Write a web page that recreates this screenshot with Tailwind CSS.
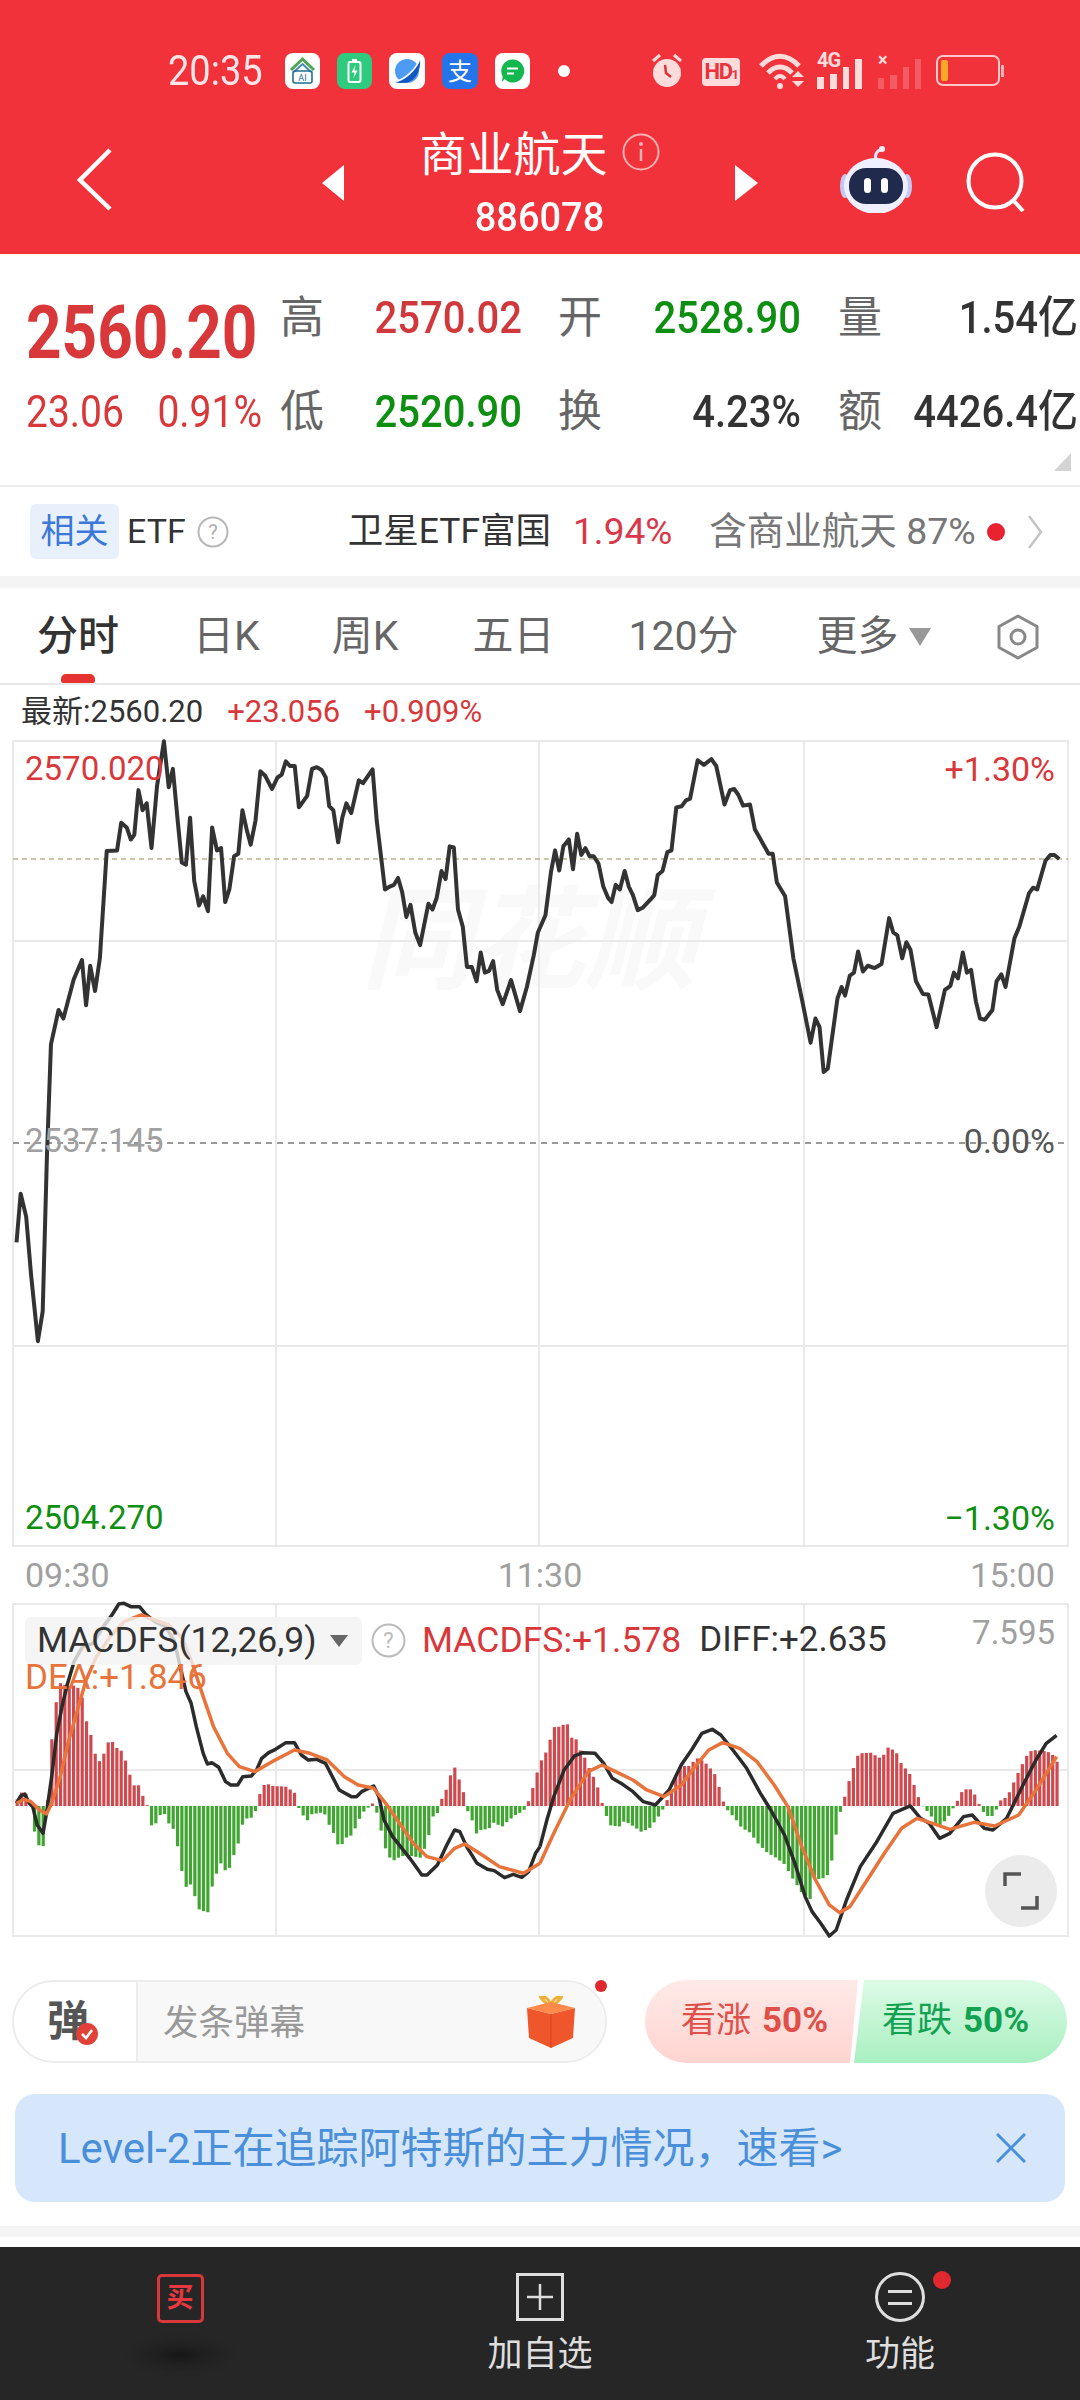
<!DOCTYPE html>
<html lang="zh-CN">
  <head>
    <meta charset="UTF-8" />
    <meta name="viewport" content="width=device-width, initial-scale=1.0" />
    <title>商业航天 886078</title>
    <script src="https://cdn.jsdelivr.net/npm/@tailwindcss/browser@4"></script>
  </head>
  <body class="bg-white font-['Roboto','Noto_Sans_CJK_SC',sans-serif] text-[#333]">
    <div class="w-[1080px] h-[2400px] overflow-hidden flex flex-col">
      <!-- red header: status bar + title -->
      <header class="h-[254px] shrink-0 bg-[#f2323b] text-white">
        <div class="h-[131px] pt-[53px] pl-[168px] flex items-start">
          <span class="w-[94px] h-[36px] leading-[36px] text-[38px] text-[#ffe6e6] scale-y-[1.1]">20:35</span>
          <div class="ml-[23px] flex items-center gap-[17px] h-[36px]">
            <svg class="w-[35px] h-[36px]" viewBox="0 0 35 36">
              <rect width="35" height="36" rx="8" fill="#fff" />
              <path d="M6 17 17.5 6 29 17" fill="none" stroke="#4da64f" stroke-width="3" />
              <path d="M9 19 17.5 11 26 19" fill="none" stroke="#3c8fb0" stroke-width="2" />
              <rect x="8" y="18" width="19" height="12" rx="2" fill="none" stroke="#1f6f95" stroke-width="1.6" />
              <text x="17.5" y="27.5" font-size="9" text-anchor="middle" fill="#1f6f95" font-family="Roboto">AI</text>
            </svg>
            <svg class="w-[35px] h-[36px]" viewBox="0 0 35 36">
              <rect width="35" height="36" rx="8" fill="#2ecb7f" />
              <rect x="11.5" y="9" width="12" height="20" rx="2" fill="none" stroke="#fff" stroke-width="2" />
              <rect x="15" y="6" width="5" height="3" fill="#fff" />
              <path d="M18.5 12 14.5 19.5H17.5L16.5 25 20.5 17.5H17.5Z" fill="#fff" />
            </svg>
            <svg class="w-[36px] h-[36px]" viewBox="0 0 36 36">
              <rect width="36" height="36" rx="8" fill="#fff" />
              <circle cx="18" cy="18" r="12" fill="#4d9cf2" />
              <path d="M6 29C14 29 26 20 31 7 32 18 26 30 14 30 11 30 8 30 6 29Z" fill="#1557c0" />
              <path d="M8 28C16 26 26 17 30 8" fill="none" stroke="#fff" stroke-width="1.6" />
            </svg>
            <svg class="w-[36px] h-[36px]" viewBox="0 0 36 36">
              <rect width="36" height="36" rx="8" fill="#2474ea" />
              <text x="18" y="27" font-size="24" text-anchor="middle" fill="#fff" font-family="Noto Sans CJK SC">支</text>
            </svg>
            <svg class="w-[35px] h-[36px]" viewBox="0 0 35 36">
              <rect width="35" height="36" rx="8" fill="#fff" />
              <path d="M17.5 6.5A11.5 11.5 0 1 1 9.5 26L7 29 7.6 23.5A11.5 11.5 0 0 1 17.5 6.5Z" fill="#12b84f" />
              <path d="M12 15.5H23M12 20.5H19" stroke="#fff" stroke-width="2" />
            </svg>
            <span class="ml-[11px] w-[12px] h-[12px] rounded-full bg-white"></span>
          </div>
          <div class="ml-[81px] flex items-start text-[#ffdcdc]">
            <svg class="w-[32px] h-[36px]" viewBox="0 0 32 36">
              <circle cx="16" cy="20" r="14" fill="#ffdcdc" />
              <path d="M2 8 9 2M30 8 23 2" stroke="#ffdcdc" stroke-width="3" />
              <path d="M14 12 15 20 20 24" fill="none" stroke="#d9333c" stroke-width="2.5" />
            </svg>
            <span class="ml-[19px] mt-[5px] w-[38px] h-[28px] rounded-[4px] bg-[#ffdcdc] text-[#e8333c] font-bold text-[22px] leading-[28px] text-center tracking-[-1.5px]">HD<span class="text-[13px]">1</span></span>
            <svg class="ml-[19px] w-[45px] h-[36px]" viewBox="0 0 45 36">
              <path d="M2 13C14 0 28 0 40 13" fill="none" stroke="#ffdcdc" stroke-width="5" />
              <path d="M9 20C16 12 26 12 33 20" fill="none" stroke="#ffdcdc" stroke-width="5" />
              <path d="M16 26C19 22 23 22 26 26" fill="none" stroke="#ffdcdc" stroke-width="4" />
              <circle cx="21" cy="33" r="3" fill="#ffdcdc" />
              <path d="M33 24H45L39 18ZM33 28H45L39 34Z" fill="#ffdcdc" />
            </svg>
            <div class="ml-[13px] w-[45px] h-[36px] relative">
              <span class="absolute left-0 -top-[3px] text-[20px] font-bold leading-[20px] tracking-[-1px]">4G</span>
              <div class="absolute inset-0 flex items-end gap-[6px]">
                <span class="w-[7px] h-[12px] bg-[#ffdcdc]"></span>
                <span class="w-[7px] h-[15px] bg-[#ffdcdc]"></span>
                <span class="w-[7px] h-[22px] bg-[#ffdcdc]"></span>
                <span class="w-[7px] h-[30px] bg-[#ffdcdc]"></span>
              </div>
            </div>
            <div class="ml-[16px] w-[43px] h-[36px] relative">
              <span class="absolute left-0 -top-[2px] text-[18px] font-bold leading-[18px]">×</span>
              <div class="absolute inset-0 flex items-end gap-[6px]">
                <span class="w-[7px] h-[11px] bg-white/20"></span>
                <span class="w-[7px] h-[14px] bg-white/20"></span>
                <span class="w-[7px] h-[22px] bg-white/20"></span>
                <span class="w-[7px] h-[30px] bg-white/20"></span>
              </div>
            </div>
            <div class="ml-[15px] mt-[2px] flex items-center">
              <div class="w-[64px] h-[31px] rounded-[7px] border-[2px] border-[#ffc8c8] p-[3px]">
                <div class="w-[7px] h-full rounded-[2px] bg-[#f9a825]"></div>
              </div>
              <span class="ml-[1px] w-[3px] h-[12px] bg-[#ffb4b4]"></span>
            </div>
          </div>
        </div>
        <nav class="flex items-start">
          <svg class="ml-[77px] mt-[17px] w-[35px] h-[63px]" viewBox="0 0 35 63">
            <path d="M33 2 3 32 33 61" fill="none" stroke="#fff" stroke-width="4.5" />
          </svg>
          <svg class="ml-[210px] mt-[34px] w-[22px] h-[36px]" viewBox="0 0 22 36">
            <path d="M22 0V36L0 18Z" fill="#fff" />
          </svg>
          <div class="w-[391px] flex flex-col items-center">
            <div class="h-[44px] mt-[2px] flex items-center">
              <span class="text-[47px] leading-[44px]">商业航天</span>
              <svg class="ml-[14px] w-[38px] h-[38px] -mt-[6px]" viewBox="0 0 38 38">
                <circle cx="19" cy="19" r="17.5" fill="none" stroke="#ffb0b0" stroke-width="2" />
                <path d="M19 16V28" stroke="#ffb0b0" stroke-width="2.5" />
                <circle cx="19" cy="11" r="2" fill="#ffb0b0" />
              </svg>
            </div>
            <span class="mt-[25px] h-[31px] leading-[31px] text-[38px] text-white font-medium block scale-y-[1.08]">886078</span>
          </div>
          <svg class="mt-[34px] w-[23px] h-[36px]" viewBox="0 0 23 36">
            <path d="M0 0V36L23 18Z" fill="#fff" />
          </svg>
          <svg class="ml-[82px] mt-[15px] w-[72px] h-[67px]" viewBox="0 0 72 67">
            <path d="M36 14C34 8 38 4 41 4" fill="none" stroke="#e8e4ff" stroke-width="3" />
            <circle cx="42" cy="3" r="3" fill="#f4f0ff" />
            <ellipse cx="5" cy="40" rx="5" ry="12" fill="#c5c8f5" />
            <ellipse cx="67" cy="40" rx="5" ry="12" fill="#c5c8f5" />
            <ellipse cx="36" cy="40" rx="32" ry="28" fill="#eef0ff" />
            <rect x="9" y="22" width="54" height="36" rx="17" fill="#1f2a4d" />
            <rect x="24" y="32" width="7" height="15" rx="3.5" fill="#fff" />
            <rect x="41" y="32" width="7" height="15" rx="3.5" fill="#fff" />
          </svg>
          <svg class="ml-[54px] mt-[21px] w-[60px] h-[60px]" viewBox="0 0 60 60">
            <circle cx="29" cy="29" r="26.5" fill="none" stroke="#fff" stroke-width="4" />
            <path d="M47 48 57 59" stroke="#fff" stroke-width="4" />
          </svg>
        </nav>
      </header>

      <!-- quote -->
      <section class="h-[231px] shrink-0 pl-[26px] pr-[2px] pt-[17px] relative">
        <div class="grid grid-cols-[254px_44px_234px_44px_236px_44px_196px] grid-rows-[94px_94px] items-center text-[40px]">
          <span class="pt-[24px] text-[62px] leading-[62px] font-bold text-[#d8383a] scale-y-[1.2]">2560.20</span>
          <span class="text-[44px] text-[#666]">高</span>
          <span class="pr-[36px] text-right font-medium text-[#d0393b] scale-y-[1.12]">2570.02</span>
          <span class="text-[44px] text-[#666]">开</span>
          <span class="pr-[37px] text-right font-medium text-[#0e8f12] scale-y-[1.12]">2528.90</span>
          <span class="text-[44px] text-[#666]">量</span>
          <span class="text-right font-medium text-[#333] scale-y-[1.12]">1.54亿</span>

          <div class="w-[236px] flex justify-between text-[39px] text-[#d8383a] scale-y-[1.12]">
            <span>23.06</span><span>0.91%</span>
          </div>
          <span class="text-[44px] text-[#666]">低</span>
          <span class="pr-[36px] text-right font-medium text-[#0e8f12] scale-y-[1.12]">2520.90</span>
          <span class="text-[44px] text-[#666]">换</span>
          <span class="pr-[37px] text-right font-medium text-[#333] scale-y-[1.12]">4.23%</span>
          <span class="text-[44px] text-[#666]">额</span>
          <span class="text-right font-medium text-[#333] scale-y-[1.12]">4426.4亿</span>
        </div>
        <svg class="absolute right-[9px] bottom-[14px] w-[17px] h-[18px]" viewBox="0 0 17 18">
          <path d="M17 0V18H0Z" fill="#d4d4d4" />
        </svg>
      </section>

      <!-- related ETF -->
      <section class="h-[91px] shrink-0 border-t-[2px] border-[#ececec] flex items-center pl-[30px] whitespace-nowrap">
        <span class="w-[89px] h-[55px] rounded-[6px] bg-[#e8f0fc] text-[#3b78d8] text-[34px] leading-[55px] text-center">相关</span>
        <span class="ml-[8px] text-[34px] text-[#333]">ETF</span>
        <svg class="ml-[11px] w-[32px] h-[32px]" viewBox="0 0 32 32">
          <circle cx="16" cy="16" r="14.5" fill="none" stroke="#b8b8b8" stroke-width="2" />
          <text x="16" y="23" font-size="20" text-anchor="middle" fill="#b0b0b0" font-family="Roboto">?</text>
        </svg>
        <span class="ml-[119px] text-[35.5px] text-[#333]">卫星ETF富国</span>
        <span class="ml-[22px] text-[37px] text-[#d8384a]">1.94%</span>
        <span class="ml-[37px] text-[37.5px] text-[#777]">含商业航天 87%</span>
        <span class="ml-[11px] w-[18px] h-[18px] rounded-full bg-[#e8222e]"></span>
        <svg class="ml-[22px] w-[16px] h-[34px]" viewBox="0 0 16 34">
          <path d="M2 1 14 17 2 33" fill="none" stroke="#c4c4c4" stroke-width="2.5" />
        </svg>
      </section>
      <div class="h-[12px] shrink-0 bg-[#f4f4f4]"></div>

      <!-- period tabs -->
      <nav class="h-[97px] shrink-0 pt-[3px] border-b-[2px] border-[#e8e8e8] relative flex items-center text-[41px] text-[#666] whitespace-nowrap">
        <span class="ml-[37px] text-[#333] font-medium">分时</span>
        <span class="ml-[74px]">日K</span>
        <span class="ml-[72px]">周K</span>
        <span class="ml-[74px]">五日</span>
        <span class="ml-[74px]">120分</span>
        <span class="ml-[78px]">更多</span>
        <svg class="ml-[10px] w-[22px] h-[18px]" viewBox="0 0 22 18">
          <path d="M0 0H22L11 18Z" fill="#999" />
        </svg>
        <svg class="ml-[64px] w-[46px] h-[46px]" viewBox="0 0 46 46">
          <path d="M23 2 42 12.500V33.500L23 44 4 33.500V12.500Z" fill="none" stroke="#888" stroke-width="3" stroke-linejoin="round" />
          <circle cx="23" cy="23" r="7" fill="none" stroke="#888" stroke-width="3" />
        </svg>
        <span class="absolute left-[61px] bottom-0 w-[34px] h-[9px] rounded-t-[5px] rounded-b-[2px] bg-[#e5342f]"></span>
      </nav>

      <div class="h-[55px] shrink-0 pl-[21px] flex items-center text-[31px] whitespace-nowrap">
        <span class="text-[#333]">最新:2560.20</span>
        <span class="ml-[24px] text-[#d8383a]">+23.056</span>
        <span class="ml-[24px] text-[#d8383a]">+0.909%</span>
      </div>

      <!-- intraday chart -->
      <section class="h-[807px] shrink-0 relative text-[33px]">
        <span class="absolute left-[361px] top-[146px] text-[112px] leading-[112px] italic font-bold text-[#f9f9f9] whitespace-nowrap">同花顺</span>
        <svg class="absolute inset-0 overflow-visible" width="1080" height="807" viewBox="0 0 1080 807">
          <g stroke="#e9e9e9" stroke-width="2" fill="none">
            <rect x="13" y="1" width="1055" height="805" />
            <path d="M276 0V807M539 0V807M804 0V807M13 201H1068M13 606H1068" />
          </g>
          <path d="M13 119H1068" stroke="#b9b48a" stroke-width="1.5" stroke-dasharray="5 4" />
          <path d="M13 403H1068" stroke="#999" stroke-width="2" stroke-dasharray="6 5" />
          <g transform="translate(0,-40) scale(.6887,.574)">
            <polyline vector-effect="non-scaling-stroke" fill="none" stroke="#333" stroke-width="4" stroke-linejoin="round"
              points="24,945 30,860 38,900 45,1000 55,1117 62,1065 68,800 74,600 85,540 92,555 107,487 119,453 125,532 131,463 138,507 145,450 155,263 170,262 176,214 184,222 190,243 195,235 201,157 207,192 213,180 220,258 228,150 238,72 245,152 251,120 258,210 264,283 270,287 276,205 282,315 289,358 295,342 302,368 308,222 315,262 321,258 327,352 333,330 340,272 346,268 352,192 358,225 364,252 371,210 378,124 385,132 395,155 403,135 409,130 415,107 421,115 428,115 434,187 446,167 453,120 460,117 467,122 473,135 478,185 484,192 491,248 497,205 503,180 510,197 521,140 527,145 541,121 547,210 553,270 559,330 566,325 572,322 578,310 584,335 590,378 596,357 603,405 610,427 622,355 628,365 634,345 641,298 647,312 653,255 659,257 665,365 672,395 678,465 685,465 692,490 698,440 704,475 710,472 716,455 722,505 730,530 742,488 755,542 765,500 775,445 781,405 792,375 800,300 806,262 812,297 818,255 826,243 832,295 838,233 844,270 850,258 856,272 862,272 869,285 876,325 883,345 888,352 894,322 900,330 907,298 913,325 919,340 926,366 933,362 945,347 950,340 955,305 962,298 969,265 975,262 982,187 990,185 996,175 1002,172 1013,105 1022,113 1033,103 1040,115 1052,182 1060,157 1066,155 1072,165 1079,184 1089,182 1096,225 1103,240 1116,268 1122,268 1128,318 1140,342 1152,450 1165,525 1177,597 1184,555 1190,570 1196,648 1202,642 1216,520 1222,500 1227,515 1234,480 1240,475 1246,438 1253,473 1260,463 1270,467 1280,460 1291,380 1297,405 1303,410 1310,450 1316,422 1322,435 1330,490 1340,512 1348,513 1360,570 1372,505 1380,498 1385,475 1391,485 1398,440 1404,475 1410,470 1417,525 1423,555 1430,557 1441,540 1447,490 1454,478 1460,500 1473,415 1480,395 1494,337 1500,327 1506,330 1518,280 1525,270 1531,270 1538,277" />
          </g>
        </svg>
        <span class="absolute left-[25px] top-[10px] leading-[38px] text-[#d8383a]">2570.020</span>
        <span class="absolute right-[25px] top-[10px] leading-[38px] text-[34px] text-[#d8383a]">+1.30%</span>
        <span class="absolute left-[25px] top-[382px] leading-[38px] text-[#a0a0a0]">2537.145</span>
        <span class="absolute right-[25px] top-[382px] leading-[38px] text-[34px] text-[#555]">0.00%</span>
        <span class="absolute left-[25px] top-[759px] leading-[38px] text-[#0e8f12]">2504.270</span>
        <span class="absolute right-[25px] top-[759px] leading-[38px] text-[34px] text-[#0e8f12]">−1.30%</span>
      </section>

      <div class="h-[56px] shrink-0 px-[25px] flex items-center justify-between text-[34px] text-[#a0a0a0]">
        <span>09:30</span><span>11:30</span><span>15:00</span>
      </div>

      <!-- MACD -->
      <section class="h-[334px] shrink-0 relative">
        <svg class="absolute inset-0 overflow-visible" width="1080" height="334" viewBox="0 0 1080 334">
          <g stroke="#e9e9e9" stroke-width="2" fill="none">
            <rect x="13" y="1" width="1055" height="332" />
            <path d="M276 0V334M539 0V334M804 0V334M13 167H1068" />
          </g>
          <g id="macdBars"></g>
          <g fill="none" stroke-width="3.5" stroke-linejoin="round">
            <g transform="translate(0,-13) scale(.3444,.3333)">
              <polyline vector-effect="non-scaling-stroke" stroke="#2b2b2b" points="48,640 60,618 72,612 85,640 95,650 108,705 125,730 135,670 150,560 165,430 180,350 195,285 215,215 240,170 270,160 300,110 325,75 345,42 360,40 380,50 405,50 425,75 450,95 480,110 505,150 520,215 540,305 555,340 570,410 590,490 602,522 615,518 635,532 655,575 670,585 690,585 705,560 730,558 745,540 760,505 780,488 800,478 830,458 855,458 875,495 895,510 920,508 945,520 965,560 985,600 1020,620 1035,620 1050,605 1085,588 1100,620 1115,690 1140,740 1190,805 1225,855 1240,855 1270,825 1295,770 1320,720 1335,725 1355,770 1385,820 1415,838 1435,842 1465,863 1490,853 1515,862 1535,845 1555,790 1568,770" />
              <polyline vector-effect="non-scaling-stroke" stroke="#e8743b" points="48,640 70,628 90,635 115,660 135,672 150,640 175,560 200,450 225,360 250,270 280,200 320,140 360,95 410,75 450,90 490,105 530,145 560,225 590,320 620,410 660,490 695,530 740,545 790,515 855,480 900,490 950,510 1000,560 1040,585 1085,595 1120,640 1160,700 1200,760 1240,800 1285,812 1320,775 1350,762 1400,795 1450,830 1520,850 1568,820" />
            </g>
            <g transform="translate(540,-13) scale(.3444,.3333)">
              <polyline vector-effect="non-scaling-stroke" stroke="#2b2b2b" points="0,770 20,690 40,620 70,540 100,498 125,488 160,490 185,520 210,565 240,583 270,605 300,635 335,645 375,600 410,525 440,480 470,430 500,418 525,435 560,480 600,535 640,610 670,660 710,735 740,820 770,920 790,965 815,1000 840,1038 860,1020 890,930 930,830 975,760 1000,715 1025,670 1075,648 1105,685 1130,700 1160,745 1190,730 1230,680 1255,675 1290,715 1315,720 1355,685 1400,590 1440,510 1470,460 1500,436" />
              <polyline vector-effect="non-scaling-stroke" stroke="#e8743b" points="0,820 40,730 90,625 140,545 180,525 230,550 270,570 310,600 360,620 410,585 450,530 490,480 530,458 580,475 630,515 680,585 720,650 760,770 800,870 840,945 870,968 900,950 950,870 1000,790 1050,715 1095,685 1140,700 1190,718 1260,697 1320,708 1390,675 1440,600 1500,500" />
            </g>
          </g>
        </svg>
        <div class="relative pl-[25px] pt-[11px] flex items-center text-[35.5px] whitespace-nowrap">
          <div class="w-[337px] h-[48px] rounded-[6px] bg-[#f2f2f2]/80 flex items-center pl-[12px]">
            <span class="w-[293px] text-[#333]">MACDFS(12,26,9)</span>
            <svg class="w-[18px] h-[12px]" viewBox="0 0 18 12"><path d="M0 0H18L9 12Z" fill="#666" /></svg>
          </div>
          <svg class="ml-[9px] w-[35px] h-[35px]" viewBox="0 0 35 35">
            <circle cx="17.500" cy="17.500" r="16" fill="#fff" stroke="#bbb" stroke-width="2" />
            <text x="17.500" y="25" font-size="22" text-anchor="middle" fill="#bbb" font-family="Roboto">?</text>
          </svg>
          <span class="ml-[16px] text-[#d8383a]">MACDFS:+1.578</span>
          <span class="ml-[18px] text-[35px] text-[#333]">DIFF:+2.635</span>
        </div>
        <span class="absolute right-[25px] top-[11px] text-[33px] leading-[38px] text-[#a0a0a0]">7.595</span>
        <span class="absolute left-[25px] top-[56px] text-[35px] leading-[38px] text-[#e8743b]">DEA:+1.846</span>
        <button class="absolute left-[985px] top-[252px] w-[72px] h-[72px] rounded-full bg-[#ebebeb] flex items-center justify-center">
          <svg class="w-[36px] h-[38px]" viewBox="0 0 36 38">
            <path d="M2 14V2H18M34 24V36H18" fill="none" stroke="#555" stroke-width="3.500" />
          </svg>
        </button>
      </section>

      <!-- danmu + votes -->
      <section class="mt-[43px] h-[83px] shrink-0 pl-[12px] pr-[13px] flex items-stretch justify-between">
        <div class="relative w-[595px] rounded-full border-[2px] border-[#ececec] flex overflow-visible">
          <div class="relative w-[122px] flex items-center pl-[33px] text-[42px] font-bold text-[#555]">
            弹
            <span class="absolute left-[62px] top-[41px] w-[22px] h-[22px] rounded-full bg-[#e0423a] flex items-center justify-center">
              <svg class="w-[14px] h-[14px]" viewBox="0 0 14 14"><path d="M2 7 6 11 12 3" fill="none" stroke="#fff" stroke-width="2.500" /></svg>
            </span>
          </div>
          <div class="flex-1 bg-[#f8f8f8] border-l-[2px] border-[#ececec] rounded-r-full flex items-center pl-[25px] text-[35.5px] text-[#999]">
            <span class="mt-[5px]">发条弹幕</span>
            <svg class="ml-[222px] w-[48px] h-[52px]" viewBox="0 0 48 52">
              <path d="M24 12C14 2 12 0 14 1 20 0 24 6 24 12 24 6 28 0 34 1 36 0 34 2 24 12Z" fill="none" stroke="#efb03a" stroke-width="3" />
              <path d="M0 12 24 18 48 12 46 42 24 52 2 42Z" fill="#f0562c" />
              <path d="M0 12 24 6 48 12 24 18Z" fill="#ff8a4a" />
              <path d="M24 18V52" stroke="#d84320" stroke-width="1" />
            </svg>
          </div>
          <span class="absolute -right-[2px] -top-[2px] w-[12px] h-[12px] rounded-full bg-[#e0282e]"></span>
        </div>
        <div class="w-[422px] flex rounded-full overflow-hidden text-[35px] whitespace-nowrap">
          <div class="w-[213px] pl-[36px] flex items-center bg-gradient-to-b from-[#ffeae8] to-[#ffd4d0] text-[#e0504a] [clip-path:polygon(0_0,100%_0,calc(100%-8px)_100%,0_100%)]">
            看涨<span class="ml-[11px] font-bold">50%</span>
          </div>
          <div class="-ml-[4px] w-[213px] pl-[28px] flex items-center bg-gradient-to-b from-[#dcfbe6] to-[#a8efc0] text-[#13a152] [clip-path:polygon(10px_0,100%_0,100%_100%,0_100%)]">
            看跌<span class="ml-[11px] font-bold">50%</span>
          </div>
        </div>
      </section>

      <!-- level-2 banner -->
      <section class="mt-[31px] mx-[15px] h-[108px] shrink-0 rounded-[20px] bg-[#d7e7fb] flex items-center justify-between pl-[43px] pr-[39px] text-[#4a8fd9]">
        <span class="text-[42px] whitespace-nowrap">Level-2正在追踪阿特斯的主力情况，速看&gt;</span>
        <svg class="w-[30px] h-[30px]" viewBox="0 0 30 30">
          <path d="M1 1 29 29M29 1 1 29" stroke="#4a8fd9" stroke-width="3" />
        </svg>
      </section>

      <div class="mt-[24px] h-[11px] shrink-0 bg-[#f4f4f4]"></div>
      <div class="h-[10px] shrink-0"></div>

      <!-- bottom bar -->
      <footer class="flex-1 bg-[#262626] grid grid-cols-3 text-[35px] text-[#dedede]">
        <div class="flex flex-col items-center pt-[27px]">
          <span class="w-[47px] h-[49px] rounded-[5px] border-[3px] border-[#d8383a] text-[#e8383f] text-[27px] leading-[42px] text-center font-bold">买</span>
          <div class="mt-[14px] w-[107px] h-[36px] bg-[radial-gradient(ellipse,#141414_0%,#202020_30%,transparent_70%)] blur-[2px]"></div>
        </div>
        <div class="flex flex-col items-center pt-[26px]">
          <span class="w-[48px] h-[48px] border-[3px] border-[#dedede] flex items-center justify-center">
            <svg class="w-[26px] h-[26px]" viewBox="0 0 26 26"><path d="M13 0V26M0 13H26" stroke="#dedede" stroke-width="2.500" /></svg>
          </span>
          <span class="mt-[12px] leading-[44px]">加自选</span>
        </div>
        <div class="relative flex flex-col items-center pt-[25px]">
          <span class="w-[50px] h-[50px] rounded-full border-[3px] border-[#dedede] flex flex-col items-center justify-center gap-[9px]">
            <span class="w-[24px] h-[3px] bg-[#dedede]"></span>
            <span class="w-[24px] h-[3px] bg-[#dedede]"></span>
          </span>
          <span class="mt-[11px] leading-[44px]">功能</span>
          <span class="absolute left-[213px] top-[24px] w-[18px] h-[18px] rounded-full bg-[#e0282e]"></span>
        </div>
      </footer>
    </div>

    <script>
      // histogram keypoints: [x, height], negative is green, traced off the chart
      const keys = [[50,20],[60,40],[72,42],[85,20],[95,-50],[108,-115],[125,-125],[135,-30],[148,175],[160,290],[172,370],[185,365],[200,360],[222,362],[237,335],[250,258],[262,222],[275,160],[288,133],[300,152],[312,190],[325,195],[337,175],[350,170],[362,145],[375,100],[388,62],[403,62],[415,30],[427,5],[438,-58],[450,-58],[462,-30],[475,-18],[490,-52],[502,-65],[515,-118],[528,-195],[540,-243],[553,-235],[565,-268],[578,-310],[590,-315],[603,-322],[615,-245],[628,-205],[640,-170],[653,-193],[665,-190],[678,-150],[690,-120],[703,-58],[715,-38],[730,-35],[742,-15],[755,38],[768,65],[780,65],[793,60],[830,58],[842,50],[855,40],[866,-3],[880,-28],[893,-43],[905,-25],[930,-20],[943,-25],[955,-55],[968,-80],[980,-115],[993,-115],[1005,-95],[1018,-90],[1030,-70],[1043,-40],[1055,-18],[1068,-6],[1082,8],[1095,-22],[1107,-75],[1120,-130],[1132,-155],[1145,-163],[1157,-155],[1170,-150],[1195,-150],[1220,-155],[1232,-130],[1245,-88],[1258,-30],[1270,-22],[1283,22],[1296,50],[1308,92],[1320,117],[1333,80],[1345,45],[1358,-15],[1370,-40],[1383,-83],[1395,-72],[1420,-68],[1433,-50],[1458,-62],[1470,-50],[1495,-28],[1520,-15],[1533,10],[1546,50],[1558,95],
        [1568,130],[1583,155],[1596,195],[1610,237],[1623,238],[1638,245],[1648,245],[1660,205],[1673,200],[1686,165],[1698,145],[1710,115],[1723,88],[1736,55],[1748,10],[1760,-28],[1773,-58],[1798,-62],[1813,-45],[1838,-60],[1863,-78],[1888,-65],[1913,-30],[1926,-8],[1938,20],[1953,50],[1963,90],[1976,120],[2000,120],[2013,133],[2028,145],[2040,135],[2053,125],[2065,110],[2078,92],[2090,50],[2103,5],[2116,-18],[2128,-30],[2140,-45],[2153,-65],[2178,-80],[2203,-115],[2228,-140],[2253,-155],[2278,-175],[2303,-220],[2316,-240],[2328,-260],[2353,-280],[2363,-220],[2388,-218],[2406,-205],[2418,-150],[2430,-70],[2443,-3],[2456,38],[2468,85],[2480,120],[2493,158],[2528,160],[2553,145],[2568,155],[2580,178],[2603,160],[2618,125],[2633,108],[2646,90],[2658,50],[2671,15],[2683,-8],[2698,-20],[2723,-65],[2748,-40],[2761,-20],[2773,5],[2783,20],[2796,50],[2823,50],[2836,22],[2848,-6],[2863,-30],[2883,-30],[2896,-5],[2908,22],[2923,25],[2935,50],[2948,82],[2961,110],[2973,135],[2985,158],[2998,168],[3035,165],[3048,160],[3061,150],[3073,125]];

      function heightAt(x) {
        for (let i = 1; i < keys.length; i++) {
          if (x <= keys[i][0]) {
            const [x0, h0] = keys[i - 1];
            const [x1, h1] = keys[i];
            return h0 + ((h1 - h0) * (x - x0)) / (x1 - x0);
          }
        }
        return 0;
      }

      const group = document.getElementById("macdBars");
      const zeroY = 203;
      for (let x = 50; x <= 3073; x += 12.58) {
        const h = heightAt(x) * 0.3333;
        const rect = document.createElementNS("http://www.w3.org/2000/svg", "rect");
        rect.setAttribute("x", (x * 0.3444 - 1.6).toFixed(2));
        rect.setAttribute("width", "3.2");
        rect.setAttribute("y", (h > 0 ? zeroY - h : zeroY).toFixed(2));
        rect.setAttribute("height", Math.abs(h).toFixed(2));
        rect.setAttribute("fill", h > 0 ? "#cf4a4e" : "#41a532");
        group.appendChild(rect);
      }
    </script>
  </body>
</html>
